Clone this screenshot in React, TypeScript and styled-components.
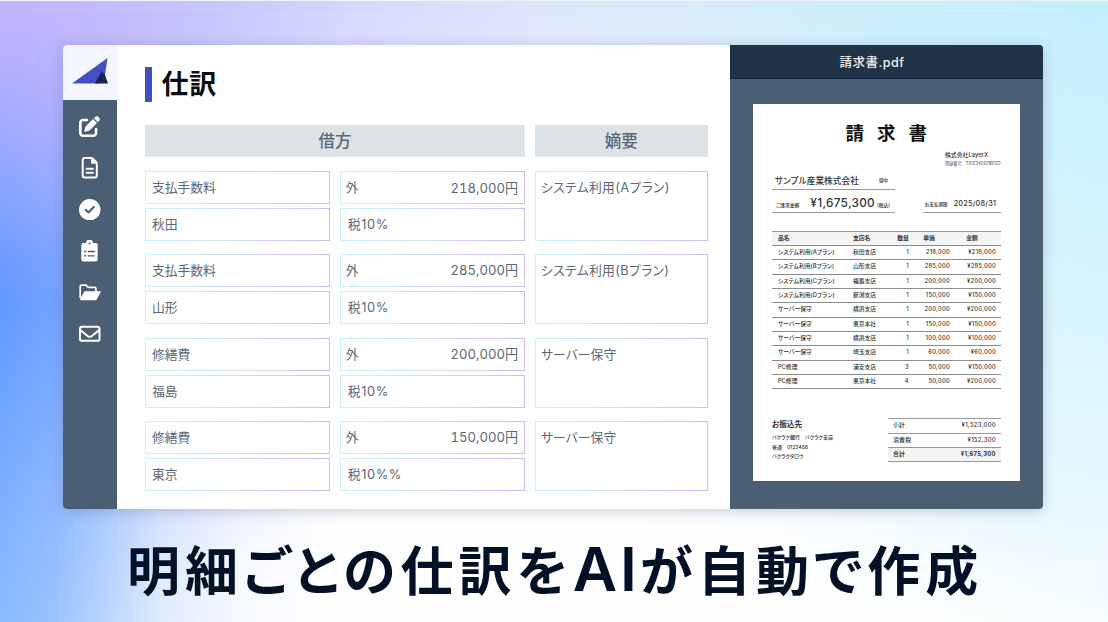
import React from 'react';
import styled, { createGlobalStyle } from 'styled-components';
import { FaPenToSquare, FaRegFileLines, FaCircleCheck, FaRegEnvelope } from 'react-icons/fa6';

const Global = createGlobalStyle`
  * { box-sizing: border-box; }
  body { margin: 0; }
`;

const Page = styled.main`
  position: relative;
  isolation: isolate;
  width: 1108px;
  height: 622px;
  overflow: hidden;
  padding: 43.6px 0 0 62.9px;
  font-family: Inter, 'Noto Sans CJK JP', sans-serif;
  font-feature-settings: 'palt';
  color: #5b6775;
  border-top: 1px solid #f1f4fb;
  background:
    linear-gradient(180deg, rgba(255, 255, 255, 0) 0%, rgba(255, 255, 255, 0.3) 45%, rgba(255, 255, 255, 0.6) 80%, rgba(255, 255, 255, 0.85) 100%),
    radial-gradient(ellipse 620px 190px at 480px 622px, #fffdfd 0%, #fffdfd 55%, rgba(255, 253, 253, 0) 100%),
    linear-gradient(90deg, #c4c0fe 0%, #c6c8fe 18%, #d8dafd 34%, #dee7fc 48%, #dbebfa 62%, #caf0fb 82%, #c5efff 100%);

  &::before {
    content: '';
    position: absolute;
    inset: 0 auto 0 0;
    width: 340px;
    z-index: -1;
    background: linear-gradient(180deg, #c4b4ff 0, #b5b1ff 60px, #a4a9ff 120px, #88a4ff 190px, #6c9aff 260px, #6199ff 305px, #6ca3ff 390px, #7caeff 490px, #8abaff 622px);
    mask-image: linear-gradient(90deg, #000 0, rgba(0, 0, 0, 0.85) 55px, rgba(0, 0, 0, 0.6) 105px, rgba(0, 0, 0, 0.28) 160px, rgba(0, 0, 0, 0.08) 240px, transparent 340px);
  }
`;

const Window = styled.section`
  display: flex;
  width: 980px;
  height: 464px;
  border-radius: 4px;
  overflow: hidden;
  background: #fff;
  box-shadow: 0 2px 14px rgba(60, 70, 100, 0.25);
`;

const Sidebar = styled.nav`
  width: 54px;
  display: flex;
  flex-direction: column;
  background: #4a5f73;
`;

const Brand = styled.div`
  height: 55px;
  padding: 13.5px 0 0 9px;
  background: #f3f6fe;
`;

const Icons = styled.div`
  display: flex;
  flex-direction: column;
  align-items: center;
  padding-top: 16px;
  color: #fff;
`;

const IconSlot = styled.div<{ $top?: number }>`
  height: 41.4px;
  display: flex;
  padding-top: ${p => p.$top ?? 0.3}px;
  svg { display: block; }
`;

const Ledger = styled.section`
  width: 613px;
  padding: 22.8px 22px 0 28px;
`;

const Title = styled.h1`
  margin: 0 0 23px;
  height: 34.5px;
  border-left: 7px solid #4450bd;
  padding-left: 9.5px;
  font-size: 27px;
  line-height: 35px;
  font-weight: 700;
  letter-spacing: 0.8px;
  color: #0c0d12;
`;

const Columns = styled.div`
  display: grid;
  grid-template-columns: 185.4px 185.4px 173.4px;
  column-gap: 9.5px;
`;

const HeadCell = styled.div<{ $span?: number }>`
  grid-column: span ${p => p.$span ?? 1};
  height: 32.5px;
  line-height: 33.5px;
  text-align: center;
  font-size: 16.5px;
  font-weight: 500;
  background: #dde2e7;
  color: #5a6978;
`;

const Entry = styled(Columns)`
  margin-top: 13.6px;
  grid-template-rows: 32.8px 32.8px;
  row-gap: 4.2px;
`;

const Field = styled.div<{ $tall?: boolean; $indent?: number; $track?: number }>`
  grid-row: ${p => (p.$tall ? 'span 2' : 'auto')};
  display: flex;
  justify-content: space-between;
  border: 1px solid transparent;
  background:
    linear-gradient(#fff, #fff) padding-box,
    linear-gradient(90deg, #c9f5f4, #d3dcf8 50%, #cdbdf2) border-box;
  padding: 0 6px 0 ${p => p.$indent ?? 6}px;
  font-size: 12.8px;
  letter-spacing: ${p => p.$track ?? 0}px;
  line-height: 31.4px;
  white-space: nowrap;
`;

const Amount = styled.span<{ $drop?: boolean }>`
  padding-top: ${p => (p.$drop ? 1.2 : 0)}px;
  font-size: 13.1px;
  font-feature-settings: 'palt', 'tnum';
`;

const Preview = styled.aside`
  flex: 1;
  background: #4a5f73;
`;

const FileName = styled.div`
  height: 34px;
  border-bottom: 1px solid #13243a;
  background: #213347;
  color: #eef2f6;
  text-align: center;
  padding-right: 29px;
  font-size: 12.5px;
  font-weight: 500;
  letter-spacing: 0.5px;
  line-height: 36.5px;
`;

const Paper = styled.article`
  margin: 25px 0 0 23px;
  width: 267px;
  height: 377px;
  padding: 17px 19px 0;
  background: #fff;
  color: #333;
`;

const PaperTitle = styled.h2`
  margin: 0;
  text-align: center;
  font-size: 18.5px;
  line-height: 25px;
  height: 26px;
  font-weight: 700;
  letter-spacing: 13px;
  padding-left: 12.5px;
  color: #111;
`;

const Issuer = styled.div`
  margin: 3px 0 0 173px;
  font-size: 5.9px;
  line-height: 9px;
  font-weight: 500;
  white-space: nowrap;
`;

const Tiny = styled.div`
  font-size: 4.2px;
  color: #666;
  white-space: pre;
`;

const Underlined = styled.div<{ $w: number; $h: number }>`
  width: ${p => p.$w}px;
  height: ${p => p.$h}px;
  display: flex;
  align-items: center;
  border-bottom: 1px solid #999;
  white-space: nowrap;
  font-weight: 500;
`;

const Split = styled.div`
  display: flex;
  justify-content: space-between;
`;

const Piece = styled.span<{ $size: number; $left?: number; $track?: number; $down?: number }>`
  font-size: ${p => p.$size}px;
  margin-left: ${p => p.$left ?? 0}px;
  padding-top: ${p => p.$down ?? 0}px;
  letter-spacing: ${p => p.$track ?? 0}px;
`;

const Items = styled.div`
  margin-top: 18px;
  border-top: 1px solid #999;
`;

const Item = styled.div<{ $head?: boolean }>`
  display: grid;
  grid-template-columns: 75px 42px 14px 41px 1fr;
  padding: 0 5px 0 6px;
  height: 14.35px;
  line-height: 12.8px;
  border-bottom: 1px solid #8c8c8c;
  font-size: 5.8px;
  font-weight: ${p => (p.$head ? 700 : 500)};
  background: ${p => (p.$head ? '#f4f4f4' : 'none')};
  white-space: nowrap;
`;

const Num = styled.span<{ $inset?: number }>`
  text-align: right;
  padding-right: ${p => p.$inset ?? 0}px;
  letter-spacing: ${p => (p.$inset === undefined ? 0.25 : 0)}px;
`;

const Closing = styled(Split)`
  margin-top: 29px;
`;

const Bank = styled.div`
  font-size: 5px;
  line-height: 9.2px;
  font-weight: 500;
  white-space: pre;
`;

const BankTitle = styled.div`
  font-size: 7.6px;
  line-height: 14px;
  font-weight: 700;
  padding-bottom: 1px;
`;

const Totals = styled.div`
  width: 113px;
  border-top: 1px solid #999;
`;

const Total = styled(Split)<{ $strong?: boolean }>`
  height: 14.35px;
  line-height: 12.8px;
  padding: 0 5px;
  border-bottom: 1px solid #999;
  font-size: 5.9px;
  letter-spacing: 0.3px;
  font-weight: ${p => (p.$strong ? 700 : 500)};
  background: ${p => (p.$strong ? '#f4f4f4' : 'none')};
`;

const Caption = styled.p`
  margin: 25px 0 0 64px;
  font-size: 53px;
  line-height: 76px;
  letter-spacing: 5.1px;
  font-weight: 600;
  white-space: nowrap;
  color: #021126;
`;

const Latin = styled.span`
  font-size: 61px;
  line-height: 1;
  letter-spacing: 3px;
`;

const entries = [
  ['支払手数料', '秋田', '218,000円', '税10%', 'システム利用(Aプラン)'],
  ['支払手数料', '山形', '285,000円', '税10%', 'システム利用(Bプラン)'],
  ['修繕費', '福島', '200,000円', '税10%', 'サーバー保守'],
  ['修繕費', '東京', '150,000円', '税10%%', 'サーバー保守'],
];

const items = [
  ['システム利用(Aプラン)', '秋田支店', '1', '218,000', '¥218,000'],
  ['システム利用(Bプラン)', '山形支店', '1', '285,000', '¥285,000'],
  ['システム利用(Cプラン)', '福島支店', '1', '200,000', '¥200,000'],
  ['システム利用(Dプラン)', '新潟支店', '1', '150,000', '¥150,000'],
  ['サーバー保守', '横浜支店', '1', '200,000', '¥200,000'],
  ['サーバー保守', '東京本社', '1', '150,000', '¥150,000'],
  ['サーバー保守', '横浜支店', '1', '100,000', '¥100,000'],
  ['サーバー保守', '埼玉支店', '1', '60,000', '¥60,000'],
  ['PC修理', '浦安支店', '3', '50,000', '¥150,000'],
  ['PC修理', '東京本社', '4', '50,000', '¥200,000'],
];

const Logo = () => (
  <svg width="37" height="27" viewBox="0 0 37 27">
    <path d="M0 25.500 L35.500 0 L33 17 L27 25.500 Z" fill="#4250c4" />
    <path d="M29.500 13.500 L33 17 L36 25.500 H23 Z" fill="#182452" />
  </svg>
);

const ClipboardIcon = () => (
  <svg width="17" height="22" viewBox="0 0 17 22">
    <path fill="#fff" d="M2.3 3H5a3.5 3.5 0 0 1 7 0h2.700a2 2 0 0 1 2 2v14.500a2 2 0 0 1-2 2H2.300a2 2 0 0 1-2-2V5a2 2 0 0 1 2-2Z" />
    <circle cx="8.500" cy="3.600" r="1" fill="#4a5f73" />
    <path d="M7.200 11.500h6M7.200 15.800h6" stroke="#4a5f73" strokeWidth="1.300" strokeLinecap="round" />
    <circle cx="4.200" cy="11.500" r="1" fill="#4a5f73" />
    <circle cx="4.200" cy="15.800" r="1" fill="#4a5f73" />
  </svg>
);

const FolderIcon = () => (
  <svg width="22" height="17" viewBox="0 0 22 17">
    <path d="M1.200 14V2.600a1.400 1.400 0 0 1 1.400-1.400h4.200l2.400 2.200h6.300A1.500 1.500 0 0 1 17 4.900v2.500" fill="none" stroke="#fff" strokeWidth="1.700" />
    <path d="M6 7.200h15.200a.6.600 0 0 1 .5.900l-4 7.300a1.400 1.400 0 0 1-1.300.8H1.700a.7.700 0 0 1-.6-1l3.900-7.300a1.200 1.200 0 0 1 1-.7Z" fill="#fff" />
  </svg>
);

export default function App() {
  return (
    <Page>
      <Global />
      <Window>
        <Sidebar>
          <Brand><Logo /></Brand>
          <Icons>
            <IconSlot><FaPenToSquare size={21} /></IconSlot>
            <IconSlot><FaRegFileLines size={21.5} /></IconSlot>
            <IconSlot><FaCircleCheck size={21.5} /></IconSlot>
            <IconSlot><ClipboardIcon /></IconSlot>
            <IconSlot $top={2.5}><FolderIcon /></IconSlot>
            <IconSlot><FaRegEnvelope size={21.5} /></IconSlot>
          </Icons>
        </Sidebar>
        <Ledger>
          <Title>仕訳</Title>
          <Columns>
            <HeadCell $span={2}>借方</HeadCell>
            <HeadCell>嫡要</HeadCell>
          </Columns>
          {entries.map(([account, place, amount, tax, note], i) => (
            <Entry key={i}>
              <Field>{account}</Field>
              <Field $indent={5}>
                <span>外</span>
                <Amount $drop={i === 0}>{amount}</Amount>
              </Field>
              <Field $tall $indent={5.3} $track={i < 2 ? 0.35 : 0.1}>{note}</Field>
              <Field>{place}</Field>
              <Field $indent={7} $track={0.6}>{tax}</Field>
            </Entry>
          ))}
        </Ledger>
        <Preview>
          <FileName>請求書.pdf</FileName>
          <Paper>
            <PaperTitle>請求書</PaperTitle>
            <Issuer>
              株式会社LayerX
              <Tiny>登録番号　T0123456789123</Tiny>
            </Issuer>
            <Underlined $w={123} $h={22}>
              <Piece $size={8.6} $left={3} $track={0.1} $down={3}>サンプル産業株式会社</Piece>
              <Piece $size={4.5} $left={20} $down={4}>御中</Piece>
            </Underlined>
            <Split>
              <Underlined $w={123} $h={23}>
                <Piece $size={4.8} $left={4} $down={7}>ご請求金額</Piece>
                <Piece $size={11.8} $left={11} $track={0.3} $down={5}>¥1,675,300</Piece>
                <Piece $size={4.8} $left={2} $down={8}>(税込)</Piece>
              </Underlined>
              <Underlined $w={78} $h={23}>
                <Piece $size={4.6} $left={2} $down={7}>お支払期限</Piece>
                <Piece $size={7.3} $left={6} $track={0.2} $down={6}>2025/08/31</Piece>
              </Underlined>
            </Split>
            <Items>
              <Item $head>
                <span>品名</span><span>支店名</span><Num $inset={0}>数量</Num>
                <Num $inset={15}>単価</Num><Num $inset={18}>金額</Num>
              </Item>
              {items.map(([name, branch, qty, price, sum], i) => (
                <Item key={i}>
                  <span>{name}</span><span>{branch}</span>
                  <Num>{qty}</Num><Num>{price}</Num><Num>{sum}</Num>
                </Item>
              ))}
            </Items>
            <Closing>
              <Bank>
                <BankTitle>お振込先</BankTitle>
                <div>バクラク銀行　バクラク支店</div>
                <div>普通　0123456</div>
                <div>バクラクタロウ</div>
              </Bank>
              <Totals>
                <Total><span>小計</span><span>¥1,523,000</span></Total>
                <Total><span>消費税</span><span>¥152,300</span></Total>
                <Total $strong><span>合計</span><span>¥1,675,300</span></Total>
              </Totals>
            </Closing>
          </Paper>
        </Preview>
      </Window>
      <Caption>明細ごとの仕訳を<Latin>AI</Latin>が自動で作成</Caption>
    </Page>
  );
}
